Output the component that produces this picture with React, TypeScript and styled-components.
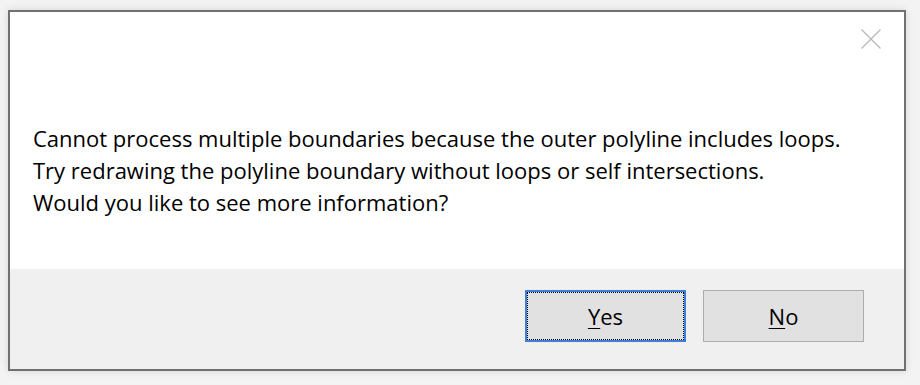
import React from "react";
import styled, { createGlobalStyle } from "styled-components";

const Global = createGlobalStyle`
  html, body { margin: 0; padding: 0; background: #f3f3f3; }
  body { font-family: "Segoe UI", "Open Sans", "Noto Sans", sans-serif; }
`;

const Page = styled.div`
  width: 920px;
  height: 385px;
  padding: 10px 0 0 8px;
  box-sizing: border-box;
`;

const Dialog = styled.div`
  width: 898px;
  height: 361px;
  box-sizing: border-box;
  border: 2px solid #707070;
  background: #ffffff;
  display: flex;
  flex-direction: column;
  box-shadow: 0 0 8px rgba(0, 0, 0, 0.12);
`;

const Body = styled.div`
  position: relative;
  height: 257px;
  box-sizing: border-box;
  padding: 110px 0 0 23px;
  background: #ffffff;
`;

const Close = styled.button`
  position: absolute;
  top: 17px;
  right: 23px;
  width: 20px;
  height: 20px;
  padding: 0;
  border: none;
  background: transparent;
  display: flex;
  svg { display: block; }
`;

const Message = styled.p`
  margin: 0;
  font-size: 22px;
  line-height: 32px;
  color: #000;
`;

const Footer = styled.div`
  flex: 1;
  background: #f0f0f0;
  display: flex;
  justify-content: flex-end;
  align-items: flex-start;
  gap: 17px;
  padding: 21px 40px 0 0;
`;

const Button = styled.button<{ $focused?: boolean }>`
  position: relative;
  width: 161px;
  height: 52px;
  box-sizing: border-box;
  background: #e1e1e1;
  border: ${(p) => (p.$focused ? "2px solid #3c7fd9" : "1px solid #adadad")};
  font-family: "Segoe UI", "Open Sans", "Noto Sans", sans-serif;
  font-size: 22px;
  color: #000;
  padding: 0;
  u { text-decoration-thickness: 1px; text-underline-offset: 3px; }
  &::after {
    content: "";
    display: ${(p) => (p.$focused ? "block" : "none")};
    position: absolute;
    inset: 0;
    border: 1px dotted #000;
  }
`;

export default function App() {
  return (
    <>
      <Global />
      <Page>
        <Dialog>
          <Body>
            <Close aria-label="Close">
              <svg width="20" height="20" viewBox="0 0 20 20">
                <path d="M0.5 0.5 L19.5 19.5 M19.5 0.5 L0.5 19.5" stroke="#b8b8b8" strokeWidth="1.3" fill="none" />
              </svg>
            </Close>
            <Message>
              Cannot process multiple boundaries because the outer polyline includes loops.
              <br />
              Try redrawing the polyline boundary without loops or self intersections.
              <br />
              Would you like to see more information?
            </Message>
          </Body>
          <Footer>
            <Button $focused>
              <u>Y</u>es
            </Button>
            <Button>
              <u>N</u>o
            </Button>
          </Footer>
        </Dialog>
      </Page>
    </>
  );
}
